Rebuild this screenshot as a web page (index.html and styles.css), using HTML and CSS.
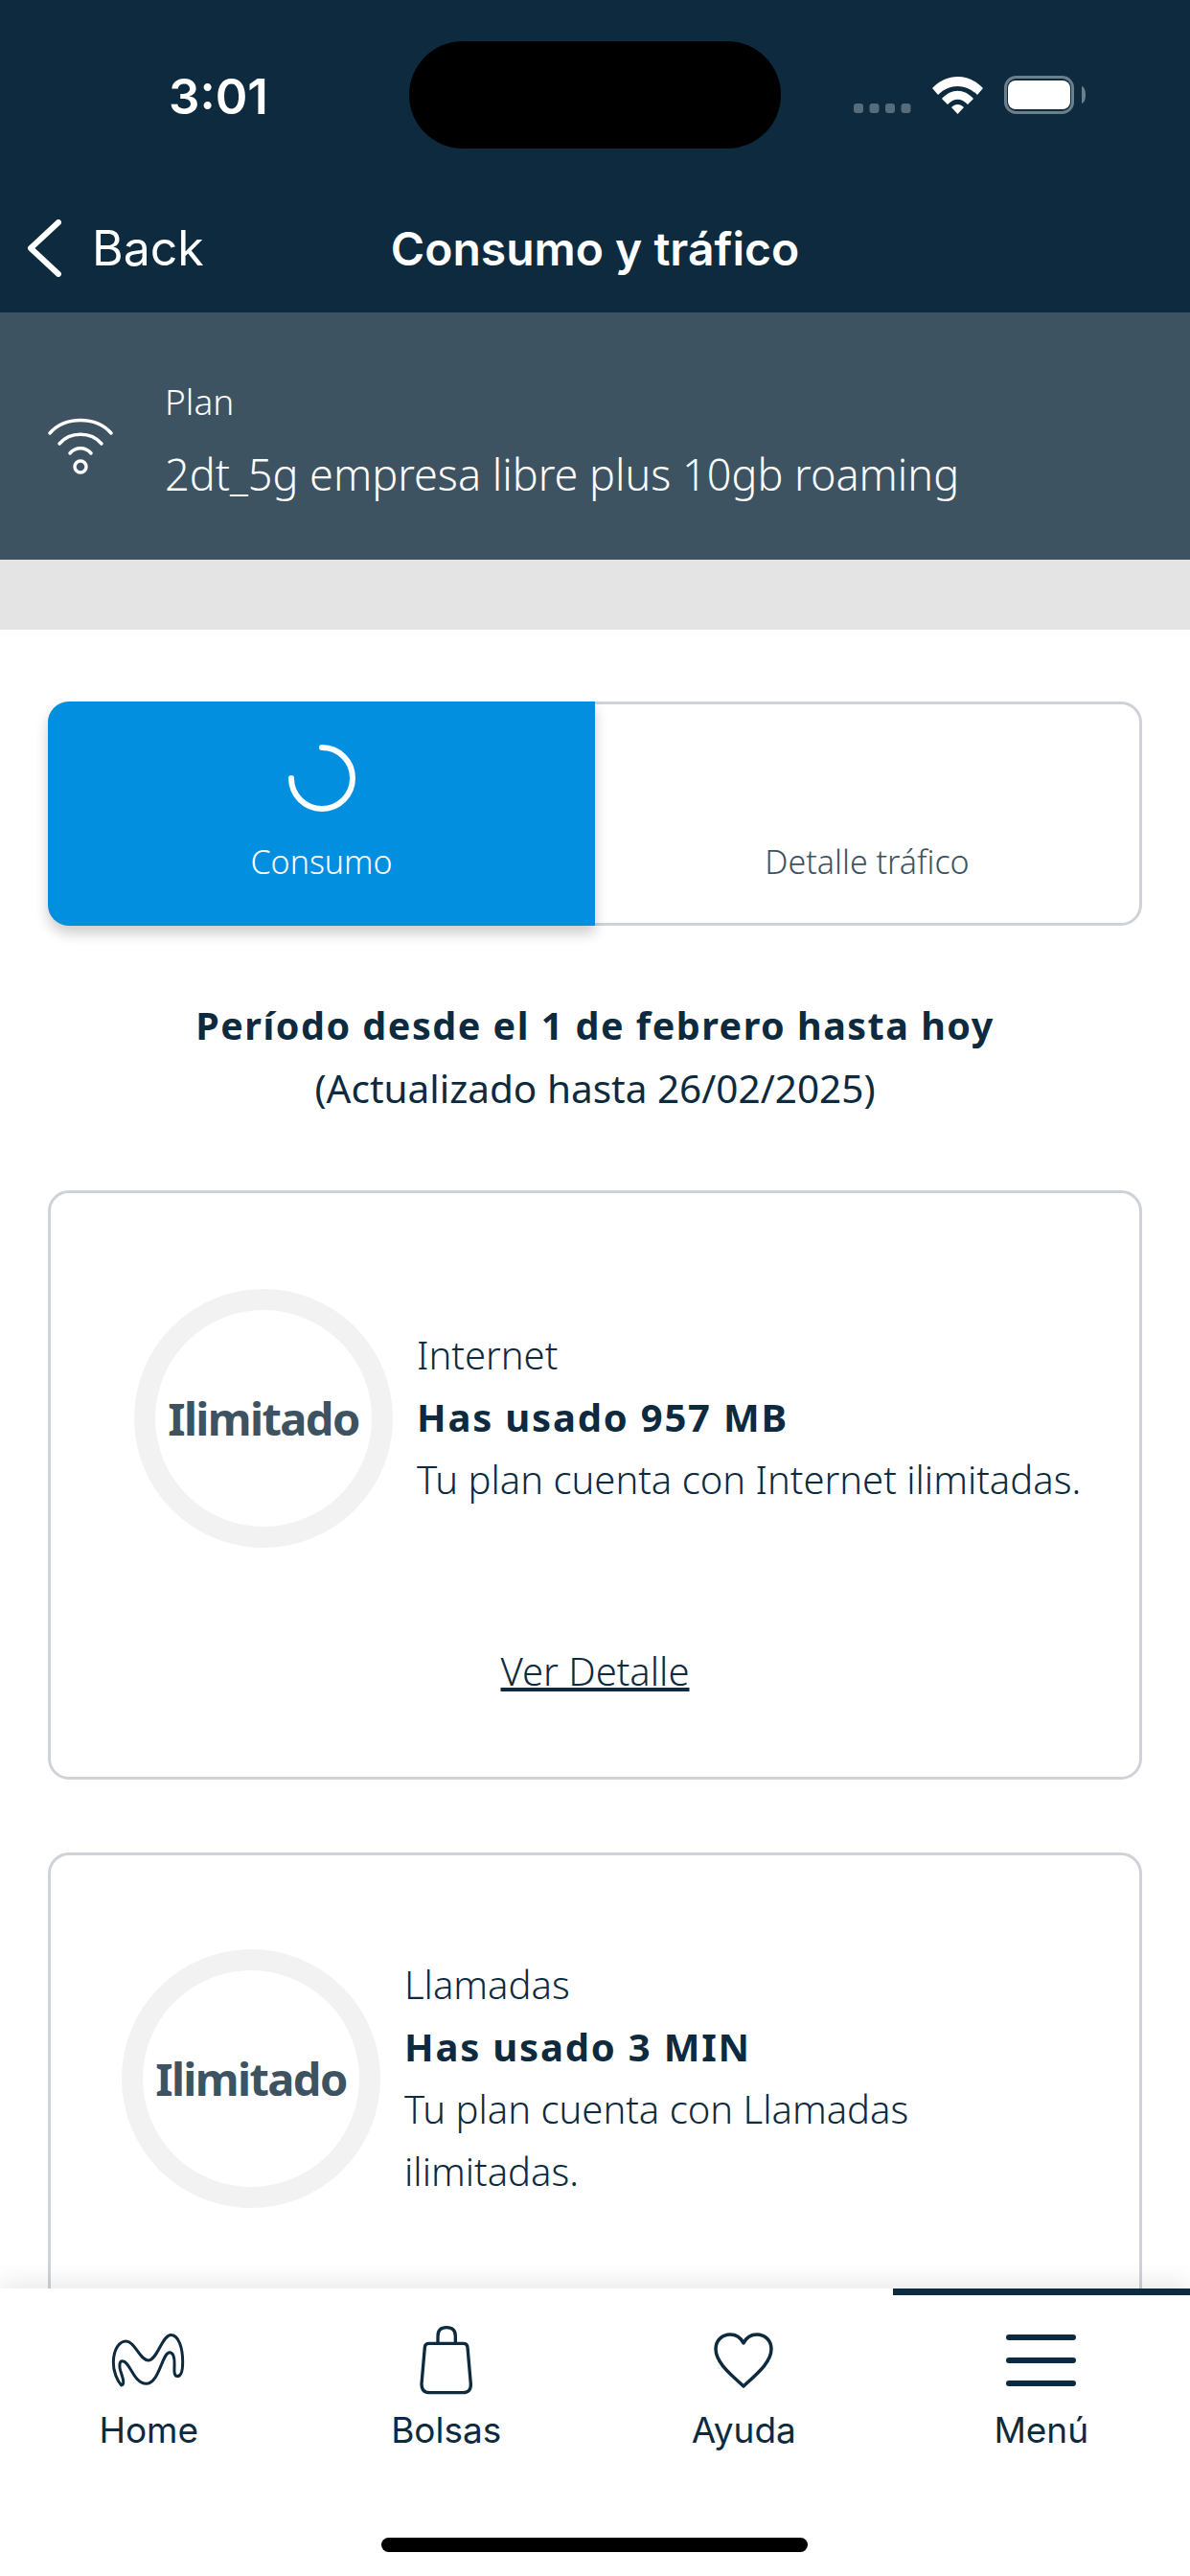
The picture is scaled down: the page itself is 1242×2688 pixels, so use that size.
FILE: index.html
```html
<!DOCTYPE html>
<html lang="es">
<head>
    <meta charset="UTF-8">
    <meta name="viewport" content="width=device-width, initial-scale=1.0">
    <title>Consumo y tráfico</title>
    <link rel="stylesheet" href="styles.css">
</head>
<body>
    <div class="app">
        <header class="top">
            <div class="status-bar">
                <span class="time">3:01</span>
                <div class="island"></div>
                <svg class="status-icons" width="242" height="40" viewBox="0 0 242 40">
                    <g fill="#566c7b">
                        <rect x="0" y="29" width="10" height="10" rx="3"/>
                        <rect x="16.5" y="29" width="10" height="10" rx="3"/>
                        <rect x="33" y="29" width="10" height="10" rx="3"/>
                        <rect x="49.500" y="29" width="10" height="10" rx="3"/>
                    </g>
                    <g fill="#fff">
                        <path d="M82 13 C97 -3 120 -3 135 13 L129 20 C117 8 100 8 88 20 Z"/>
                        <path d="M92 24 C102 13 115 13 125 24 L119 30 C112 23 105 23 98 30 Z"/>
                        <path d="M102 33 C106 29 111 29 115 33 L108.500 40 Z"/>
                        <rect x="161" y="5" width="65" height="30" rx="8"/>
                        <path d="M238 11 C241 12 242 16 242 20 C242 24 241 28 238 29 Z" fill="#6b7f8c"/>
                    </g>
                    <rect x="158.500" y="1.500" width="70" height="37" rx="11" fill="none" stroke="#6b7f8c" stroke-width="3"/>
                </svg>
            </div>
            <nav class="nav">
                <a class="back">
                    <svg width="36" height="60" viewBox="0 0 36 60"><path d="M33 3 L4 30 L33 57" fill="none" stroke="#fff" stroke-width="6" stroke-linecap="round" stroke-linejoin="round"/></svg>
                    <span>Back</span>
                </a>
                <h1>Consumo y tráfico</h1>
            </nav>
        </header>

        <section class="plan">
            <svg class="plan-icon" width="70" height="62" viewBox="0 0 70 62">
                <g fill="none" stroke="#fff" stroke-width="3.500" stroke-linecap="round">
                    <path d="M3 17 C19 -1 51 -1 67 17"/>
                    <path d="M13 28 C24 15 46 15 57 28"/>
                    <path d="M24 38 C30 31 40 31 46 38"/>
                    <circle cx="35" cy="52" r="6"/>
                </g>
            </svg>
            <div>
                <div class="plan-label">Plan</div>
                <div class="plan-name">2dt_5g empresa libre plus 10gb roaming</div>
            </div>
        </section>
        <div class="divider"></div>

        <main class="content">
            <div class="tabs">
                <div class="tab tab-active">
                    <svg width="72" height="72" viewBox="0 0 72 72"><path d="M36 4 A32 32 0 1 1 4 36" fill="none" stroke="#fff" stroke-width="6" stroke-linecap="round"/></svg>
                    <span>Consumo</span>
                </div>
                <div class="tab">
                    <span>Detalle tráfico</span>
                </div>
            </div>

            <div class="period">
                <strong>Período desde el 1 de febrero hasta hoy</strong>
                <span>(Actualizado hasta 26/02/2025)</span>
            </div>

            <div class="card">
                <div class="card-row">
                    <div class="ring">Ilimitado</div>
                    <div class="card-text">
                        <div>Internet</div>
                        <strong>Has usado 957 MB</strong>
                        <div>Tu plan cuenta con Internet ilimitadas.</div>
                    </div>
                </div>
                <a class="detail-link">Ver Detalle</a>
            </div>

            <div class="card card-compact">
                <div class="card-row">
                    <div class="ring">Ilimitado</div>
                    <div class="card-text">
                        <div>Llamadas</div>
                        <strong>Has usado 3 MIN</strong>
                        <div>Tu plan cuenta con Llamadas ilimitadas.</div>
                    </div>
                </div>
            </div>
        </main>

        <footer class="tabbar">
            <div class="tabbar-items">
                <div class="tabbar-item">
                    <div class="tabbar-icon">
                        <svg width="78" height="60" viewBox="80 40 235 180"><path d="M112 208 C100 195 86 165 87 135 C88 95 105 70 127 70 C155 70 170 130 197 130 C225 130 240 50 268 50 C292 50 305 90 305 135 C305 160 300 180 288 180 C278 180 278 165 279 145 C280 120 275 105 264 105 C240 105 232 203 190 203 C150 203 140 132 115 132 C105 132 105 150 110 165 C115 180 125 208 112 208 Z" fill="none" stroke="#0d2a3e" stroke-width="9" stroke-linejoin="round"/></svg>
                    </div>
                    <span>Home</span>
                </div>
                <div class="tabbar-item">
                    <div class="tabbar-icon">
                        <svg width="60" height="74" viewBox="1040 20 180 222"><g fill="none" stroke="#0d2a3e" stroke-width="10" stroke-linejoin="round"><path d="M1103 78 V55 C1103 35 1115 28 1130 28 C1145 28 1158 35 1158 55 V78"/><path d="M1075 78 H1183 Q1195 78 1196 90 L1206 205 Q1207 232 1182 232 H1078 Q1052 232 1052 205 L1062 90 Q1063 78 1075 78 Z"/></g></svg>
                    </div>
                    <span>Bolsas</span>
                </div>
                <div class="tabbar-item">
                    <div class="tabbar-icon">
                        <svg width="64" height="60" viewBox="0 0 64 60"><path d="M32 57 C18 44 3 32 3 18 C3 9 10 3 18 3 C24 3 29 6 32 12 C35 6 40 3 46 3 C54 3 61 9 61 18 C61 32 46 44 32 57 Z" fill="none" stroke="#0d2a3e" stroke-width="3.500" stroke-linejoin="round"/></svg>
                    </div>
                    <span>Ayuda</span>
                </div>
                <div class="tabbar-item tabbar-item-active">
                    <div class="tabbar-icon">
                        <div class="burger"><i></i><i></i><i></i></div>
                    </div>
                    <span>Menú</span>
                </div>
            </div>
            <div class="home-indicator"></div>
        </footer>
    </div>
</body>
</html>
```

FILE: styles.css
```css
* {
    box-sizing: border-box;
}

body {
    margin: 0;
    font-family: 'Noto Sans', sans-serif;
    color: #0d2a3e;
    background-color: white;
}

.app {
    width: 1242px;
    height: 2688px;
    display: flex;
    flex-direction: column;
    overflow: hidden;
}

/* header */
.top {
    height: 326px;
    padding-top: 42px;
    background-color: #0d2a3e;
    color: white;
}

.status-bar {
    display: flex;
    align-items: center;
    height: 114px;
    padding-left: 176px;
}

.time {
    width: 251px;
    padding-top: 2px;
    font-family: Inter, sans-serif;
    font-size: 51px;
    font-weight: 600;
}

.island {
    width: 388px;
    height: 112px;
    border-radius: 56px;
    background-color: black;
}

.status-icons {
    margin-left: 76px;
}

.nav {
    display: grid;
    grid-template-columns: 1fr auto 1fr;
    align-items: center;
    height: 60px;
    margin-top: 73px;
}

.back {
    display: flex;
    align-items: center;
    gap: 32px;
    padding-left: 28px;
    font-family: Inter, sans-serif;
    font-size: 50px;
}

.nav h1 {
    margin: 0;
    font-family: Inter, sans-serif;
    font-size: 48px;
    font-weight: 600;
}

/* plan */
.plan {
    display: flex;
    align-items: center;
    gap: 53px;
    height: 258px;
    padding-left: 49px;
    background-color: #3e5362;
    color: white;
}

.plan-icon {
    margin-top: 22px;
}

.plan-label {
    margin-top: 3px;
    font-size: 37px;
    font-weight: 300;
    line-height: 50px;
}

.plan-name {
    margin-top: 26px;
    font-size: 45px;
    font-weight: 300;
    line-height: 50px;
}

.divider {
    height: 73px;
    background-color: #e4e4e4;
}

/* content */
.content {
    flex: 1;
    min-height: 0;
    overflow: hidden;
    padding: 75px 50px 0;
}

.tabs {
    display: grid;
    grid-template-columns: 1fr 1fr;
    height: 234px;
    border: 3px solid #cdd3d8;
    border-radius: 22px;
}

.tab {
    display: flex;
    flex-direction: column;
    align-items: center;
    justify-content: flex-end;
    gap: 28px;
    padding-bottom: 41px;
    font-size: 34px;
    font-weight: 300;
    line-height: 46px;
    color: #3e5362;
}

.tab-active {
    margin: -3px 0 -3px -3px;
    padding-bottom: 44px;
    border-radius: 22px 0 0 22px;
    background-color: #038fe0;
    color: white;
    box-shadow: 0 8px 14px rgba(0,0,0,0.2);
}

.period {
    display: flex;
    flex-direction: column;
    align-items: center;
    margin-top: 72px;
    font-size: 40.500px;
    line-height: 65px;
}

.period strong {
    font-size: 39.500px;
    font-weight: 700;
    letter-spacing: 1.500px;
}

.card {
    margin-top: 74px;
    padding: 100px 0 80px 87px;
    border: 3px solid #cdd3d8;
    border-radius: 22px;
}

.card-compact {
    height: 620px;
    margin-top: 76px;
    padding-top: 98px;
    padding-left: 74px;
}

.card-row {
    display: flex;
    align-items: center;
    gap: 25px;
}

.ring {
    display: flex;
    align-items: center;
    justify-content: center;
    flex: none;
    width: 270px;
    height: 270px;
    border: 22px solid #f2f2f2;
    border-radius: 50%;
    font-size: 47px;
    font-weight: 700;
    color: #3e5362;
    letter-spacing: -1.600px;
    white-space: nowrap;
}

.card-text {
    display: flex;
    flex-direction: column;
    margin-top: -4px;
    font-size: 40px;
    font-weight: 300;
    line-height: 65px;
}

.card-text strong {
    font-weight: 700;
    letter-spacing: 1.800px;
}

.card-compact .card-text {
    width: 600px;
    margin-top: -2px;
}

.detail-link {
    display: block;
    margin: 99px 0 0 -87px;
    font-size: 40px;
    font-weight: 300;
    line-height: 60px;
    text-align: center;
    text-decoration: underline;
}

/* bottom bar */
.tabbar {
    position: relative;
    height: 300px;
    background-color: white;
    box-shadow: 0 -6px 24px rgba(0,0,0,0.09);
}

.tabbar-items {
    display: grid;
    grid-template-columns: repeat(4, 1fr);
}

.tabbar-item {
    display: flex;
    flex-direction: column;
    align-items: center;
    padding-top: 38px;
    font-family: Inter, sans-serif;
    font-size: 37px;
    line-height: 50px;
}

.tabbar-item-active {
    border-top: 7px solid #0d2a3e;
    padding-top: 31px;
}

.tabbar-icon {
    display: flex;
    align-items: center;
    justify-content: center;
    height: 74px;
    margin-bottom: 11px;
}

.burger {
    display: flex;
    flex-direction: column;
    gap: 18px;
    width: 73px;
}

.burger i {
    display: block;
    height: 6px;
    border-radius: 3px;
    background-color: #0d2a3e;
}

.home-indicator {
    position: absolute;
    left: 398px;
    top: 260px;
    width: 445px;
    height: 15px;
    border-radius: 8px;
    background-color: black;
}
```
